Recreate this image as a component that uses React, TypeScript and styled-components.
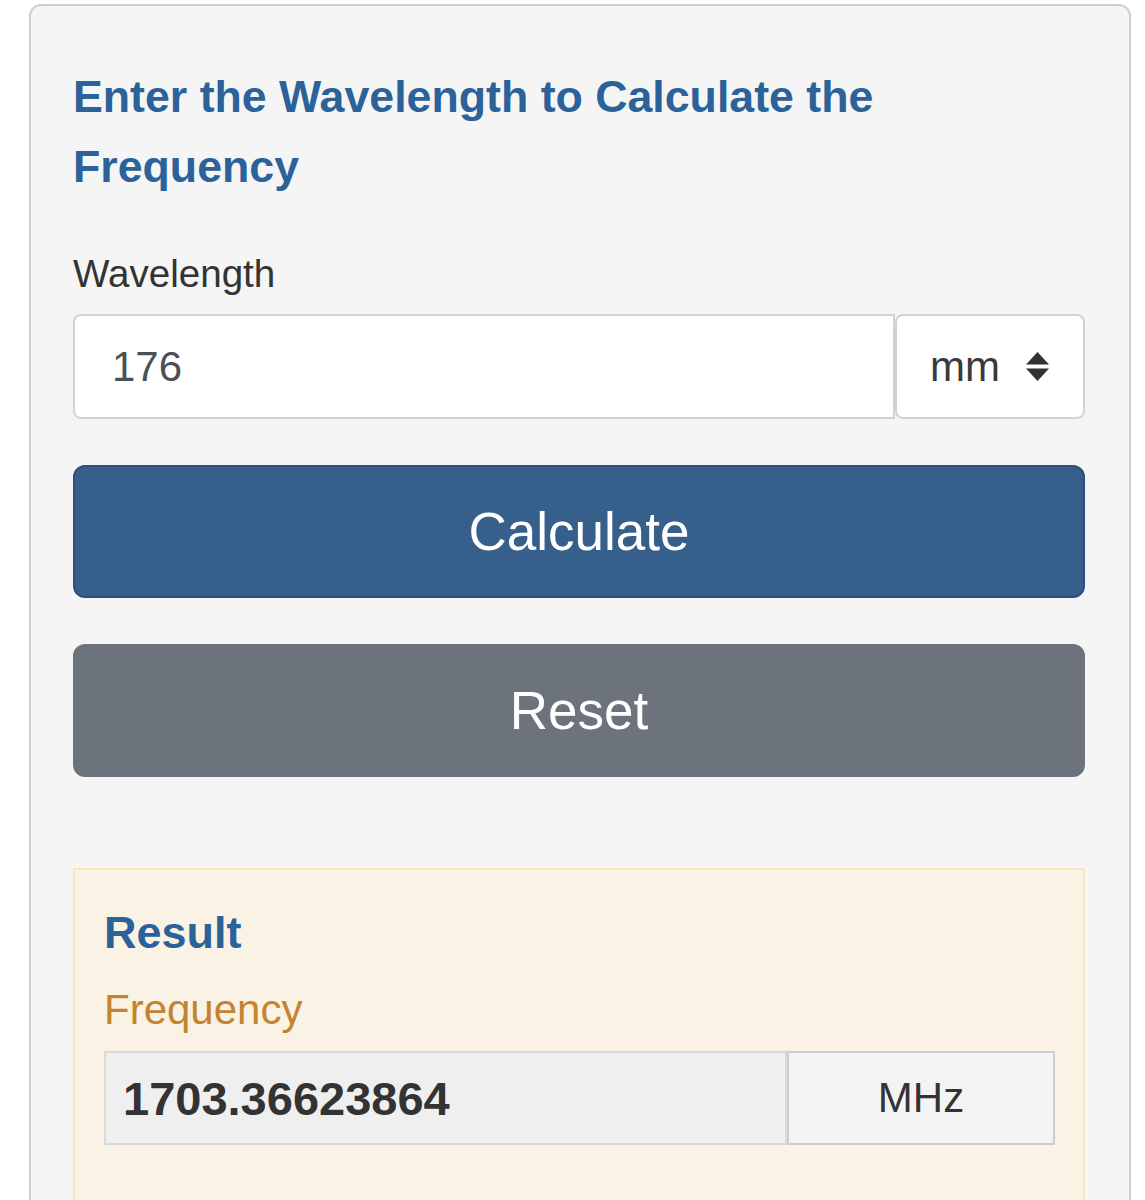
import React, { FC } from 'react';
import styled, { createGlobalStyle } from 'styled-components';

const GlobalStyle = createGlobalStyle`
  html, body {
    margin: 0;
    padding: 0;
    background: #fff;
  }
  body {
    font-family: "Liberation Sans", Arial, Helvetica, sans-serif;
    color: #333;
  }
`;

const Page = styled.div`
  padding: 4px 14px 0 29px;
`;

const Panel = styled.section`
  box-sizing: border-box;
  width: 1102px;
  min-height: 1240px;
  background: #f5f5f5;
  border: 2px solid #cfcfcf;
  border-radius: 12px;
  padding: 56px 44px 0 42px;
`;

const Heading = styled.h2`
  margin: 0;
  font-size: 44.7px;
  line-height: 70px;
  font-weight: 700;
  color: #2b629a;
`;

const Label = styled.label`
  display: block;
  margin-top: 43px;
  font-size: 38.6px;
  line-height: 57px;
  color: #333;
`;

const InputGroup = styled.div`
  display: flex;
  margin-top: 12px;
  height: 105px;
`;

const NumberField = styled.div`
  box-sizing: border-box;
  flex: 1;
  display: flex;
  align-items: center;
  padding-left: 37px;
  background: #fff;
  border: 2px solid #d2d2d2;
  border-radius: 8px 0 0 8px;
  font-size: 42px;
  color: #495057;
`;

const UnitSelect = styled.div`
  box-sizing: border-box;
  width: 190px;
  display: flex;
  align-items: center;
  justify-content: space-between;
  padding: 0 34px 0 33px;
  background: #fff;
  border: 2px solid #d2d2d2;
  border-radius: 8px;
  font-size: 42px;
  color: #3a3a3a;
`;

const Button = styled.button<{ tone: 'primary' | 'secondary' }>`
  box-sizing: border-box;
  display: block;
  width: 100%;
  height: 133px;
  margin-top: 46px;
  border-radius: 12px;
  font-family: "Liberation Sans", Arial, Helvetica, sans-serif;
  font-size: 53px;
  color: #fff;
  cursor: pointer;
  background: ${({ tone }) => (tone === 'primary' ? '#365f8b' : '#6c737c')};
  border: 2px solid ${({ tone }) => (tone === 'primary' ? '#2c5079' : '#6c737c')};
`;

const ResultBox = styled.div`
  box-sizing: border-box;
  margin-top: 91px;
  min-height: 400px;
  background: #faf2e5;
  border: 2px solid #f9e5be;
  padding: 36px 28px 0 29px;
`;

const ResultTitle = styled.h3`
  margin: 0;
  font-size: 45px;
  line-height: 54px;
  font-weight: 700;
  color: #2b629a;
`;

const ResultLabel = styled.div`
  margin-top: 18px;
  font-size: 42px;
  line-height: 63px;
  color: #c4842f;
`;

const OutputRow = styled.div`
  display: flex;
  margin-top: 10px;
  height: 94px;
`;

const OutputValue = styled.div`
  box-sizing: border-box;
  flex: 1;
  display: flex;
  align-items: center;
  padding-left: 17px;
  background: #efefef;
  border: 2px solid #d9d9d9;
  font-size: 47px;
  font-weight: 700;
  color: #333;
`;

const OutputUnit = styled.div`
  box-sizing: border-box;
  width: 268px;
  display: flex;
  align-items: center;
  justify-content: center;
  background: #f3f3f3;
  border: 2px solid #cdcdcd;
  font-size: 42px;
  color: #333;
`;

const SortIcon: FC = () => (
  <svg width="23" height="29" viewBox="0 0 23 29" aria-hidden="true">
    <path d="M11.5 0 L23 12.5 H0 Z" fill="#333" />
    <path d="M0 16.5 H23 L11.5 29 Z" fill="#333" />
  </svg>
);

const App: FC = () => (
  <Page>
    <GlobalStyle />
    <Panel>
      <Heading>Enter the Wavelength to Calculate the Frequency</Heading>
      <Label>Wavelength</Label>
      <InputGroup>
        <NumberField>176</NumberField>
        <UnitSelect>
          <span>mm</span>
          <SortIcon />
        </UnitSelect>
      </InputGroup>
      <Button tone="primary">Calculate</Button>
      <Button tone="secondary">Reset</Button>
      <ResultBox>
        <ResultTitle>Result</ResultTitle>
        <ResultLabel>Frequency</ResultLabel>
        <OutputRow>
          <OutputValue>1703.36623864</OutputValue>
          <OutputUnit>MHz</OutputUnit>
        </OutputRow>
      </ResultBox>
    </Panel>
  </Page>
);

export default App;
